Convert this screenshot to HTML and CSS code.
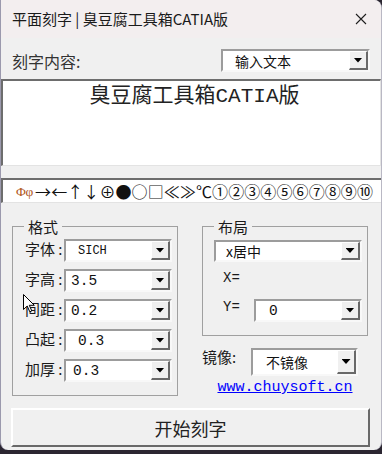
FILE: index.html
```html
<!DOCTYPE html>
<html lang="zh-CN">
<head>
<meta charset="utf-8">
<title>平面刻字</title>
<link rel="stylesheet" href="styles.css">
</head>
<body>
<div class="window">
  <div class="titlebar">
    <span class="title">平面刻字 | 臭豆腐工具箱CATIA版</span>
    <svg class="close" width="12" height="12" viewBox="0 0 12 12"><path d="M1 1L11 11M11 1L1 11" stroke="#1f1f1f" stroke-width="1.1" fill="none"/></svg>
  </div>
  <div class="main">
    <div class="toprow">
      <span class="lbl-main">刻字内容:</span>
      <div class="combo combo-src"><span class="cval cjk p12">输入文本</span><span class="cbtn"><i class="arrow"></i></span></div>
    </div>
    <div class="textarea"><div class="engrave">臭豆腐工具箱CATIA版</div></div>
    <div class="symbar"><span class="phi">Φ</span><span class="phi">φ</span><span class="sym">→</span><span class="sym">←</span><span class="sym">↑</span><span class="sym">↓</span><span class="sym">⊕</span><span class="sym">●</span><span class="sym">○</span><span class="sym">□</span><span class="sym">≪</span><span class="sym">≫</span><span class="sym">℃</span><span class="sym">①</span><span class="sym">②</span><span class="sym">③</span><span class="sym">④</span><span class="sym">⑤</span><span class="sym">⑥</span><span class="sym">⑦</span><span class="sym">⑧</span><span class="sym">⑨</span><span class="sym">⑩</span></div>
    <div class="groups">
      <fieldset class="group group-fmt">
        <legend>格式</legend>
        <div class="fields">
          <div class="field"><span class="flabel">字体 :</span><div class="combo w108"><span class="cval mono-s p12">SICH</span><span class="cbtn"><i class="arrow"></i></span></div></div>
          <div class="field"><span class="flabel">字高 :</span><div class="combo w108"><span class="cval mono-n p5">3.5</span><span class="cbtn"><i class="arrow"></i></span></div></div>
          <div class="field"><span class="flabel">间距 :</span><div class="combo w108"><span class="cval mono-n p5">0.2</span><span class="cbtn"><i class="arrow"></i></span></div></div>
          <div class="field"><span class="flabel">凸起 :</span><div class="combo w108"><span class="cval mono-n p12">0.3</span><span class="cbtn"><i class="arrow"></i></span></div></div>
          <div class="field"><span class="flabel">加厚 :</span><div class="combo w108"><span class="cval mono-n p6">0.3</span><span class="cbtn"><i class="arrow"></i></span></div></div>
        </div>
      </fieldset>
      <div class="rightcol">
        <fieldset class="group group-lay">
          <legend>布局</legend>
          <div class="combo combo-lay"><span class="cval cjk p10">x居中</span><span class="cbtn"><i class="arrow"></i></span></div>
          <div class="xrow">X=</div>
          <div class="yrow"><span class="ylabel">Y=</span><div class="combo w108"><span class="cval mono-n p13">0</span><span class="cbtn"><i class="arrow"></i></span></div></div>
        </fieldset>
        <div class="mirror"><span class="mlabel">镜像:</span><div class="combo combo-mir"><span class="cval cjk p13">不镜像</span><span class="cbtn"><i class="arrow"></i></span></div></div>
        <a class="link" href="#">www.chuysoft.cn</a>
      </div>
    </div>
    <button class="start">开始刻字</button>
  </div>
  <svg class="cursor" width="13" height="20" viewBox="0 0 13 20"><path d="M0.5 0.5 V15.5 L4.2 12 L6.8 17.8 L8.8 16.9 L6.3 11.3 H11.3 Z" fill="#fff" stroke="#000" stroke-width="1" stroke-linejoin="round"/></svg>
</div>
</body>
</html>
```
FILE: styles.css
```css
html, body {
  margin: 0;
  padding: 0;
}
body {
  width: 382px;
  height: 454px;
  overflow: hidden;
  background: #2b2631;
}
.window {
  position: relative;
  box-sizing: border-box;
  width: 382px;
  height: 450px;
  background: #f0f0f0;
  border-left: 1px solid #9b99ad;
  border-right: 1px solid #b9b8c4;
  border-radius: 0 8px 8px 8px;
  overflow: hidden;
  display: flex;
  flex-direction: column;
  font-family: "Noto Sans CJK SC", sans-serif;
  color: #1a1a1a;
}
.titlebar {
  flex: none;
  height: 38px;
  background: #f3eeef;
  display: flex;
  align-items: center;
  justify-content: space-between;
  padding: 0 14px 0 11px;
}
.title {
  font-size: 15px;
  line-height: 20px;
  color: #1a1a1a;
}
.close {
  display: block;
}
.main {
  flex: 1;
  display: flex;
  flex-direction: column;
}
.toprow {
  flex: none;
  display: flex;
  justify-content: space-between;
  align-items: center;
  margin-top: 11px;
  padding: 0 11px;
  height: 23px;
}
.lbl-main {
  font-size: 16px;
  line-height: 20px;
  color: #333;
}
.combo {
  display: flex;
  box-sizing: border-box;
  flex: none;
  background: #fff;
  border: 2px solid;
  border-color: #9c9c9c #f8f8f8 #f8f8f8 #9c9c9c;
  color: #111;
}
.combo-src { width: 149px; height: 23px; }
.w108 { width: 108px; height: 23px; }
.combo-lay { width: 148px; height: 22px; }
.combo-mir { width: 107px; height: 28px; }
.cval {
  flex: 1;
  display: flex;
  align-items: center;
  white-space: nowrap;
  overflow: hidden;
}
.cjk { font-family: "Noto Sans CJK SC", sans-serif; font-size: 14px; }
.mono-s { font-family: "Liberation Mono", monospace; font-size: 12px; }
.mono-n { font-family: "Liberation Mono", monospace; font-size: 14.5px; }
.p5 { padding-left: 5px; }
.p6 { padding-left: 7px; }
.p10 { padding-left: 10px; }
.p12 { padding-left: 12px; }
.p13 { padding-left: 13px; }
.cbtn {
  flex: none;
  width: 19px;
  box-sizing: border-box;
  background: #f0f0f0;
  border-top: 1px solid #fff;
  border-left: 1px solid #fff;
  border-right: 2px solid #696969;
  border-bottom: 2px solid #696969;
  display: flex;
  align-items: center;
  justify-content: center;
}
.arrow {
  display: block;
  width: 9px;
  height: 5px;
  background: #000;
  clip-path: polygon(0 0, 100% 0, 50% 100%);
}
.textarea {
  flex: none;
  margin-top: 7px;
  height: 87px;
  box-sizing: border-box;
  background: #fff;
  border-top: 2px solid #6d6d6d;
  border-left: 2px solid #6d6d6d;
  border-bottom: 1px solid #e3e3e3;
  border-right: 1px solid #e3e3e3;
  text-align: center;
  padding: 3px 0 0 6px;
}
.engrave {
  font-family: "Liberation Mono", "Noto Sans CJK SC", monospace;
  font-size: 21px;
  line-height: 26px;
  color: #222;
}
.symbar {
  flex: none;
  display: flex;
  align-items: center;
  margin-top: 12px;
  height: 25px;
  box-sizing: border-box;
  background: #fff;
  border-top: 2px solid #6d6d6d;
  border-left: 2px solid #6d6d6d;
  border-bottom: 1px solid #e3e3e3;
  padding-left: 13px;
  font-family: "Noto Sans CJK SC", sans-serif;
  font-size: 16px;
  line-height: 21px;
  white-space: nowrap;
  overflow: hidden;
  color: #111;
}
.phi {
  display: inline-block;
  flex: none;
  width: 9px;
  text-align: center;
  font-family: "Liberation Serif", serif;
  color: #b0561a;
  font-size: 13.5px;
}
.phi + .sym {
  margin-left: 1px;
}
.sym {
  display: inline-block;
  flex: none;
  width: 16.1px;
  text-align: center;
}
.group {
  margin: 0;
  box-sizing: border-box;
  width: 166px;
  min-width: 0;
  border: 1px solid #a0a0a0;
}
.groups {
  flex: none;
  display: flex;
  align-items: flex-start;
  gap: 24px;
  margin-top: 16px;
  padding-left: 11px;
}
.group legend {
  font-size: 15px;
  line-height: 15px;
  padding: 0 4px;
  color: #1a1a1a;
}
.group-fmt {
  padding: 5px 5px 13px 12px;
}
.group-fmt legend {
  margin-left: -1px;
}
.group-lay {
  padding: 6px 5px 13px 11px;
}
.fields {
  display: flex;
  flex-direction: column;
  gap: 7px;
}
.field {
  display: flex;
  align-items: flex-start;
}
.flabel {
  flex: none;
  width: 39px;
  font-size: 15px;
  line-height: 19px;
  white-space: nowrap;
}
.rightcol {
  width: 166px;
  display: flex;
  flex-direction: column;
}
.xrow {
  margin-top: 8px;
  margin-left: 9px;
  font-family: "Liberation Mono", monospace;
  font-size: 14px;
  line-height: 16px;
}
.yrow {
  display: flex;
  align-items: flex-start;
  margin-top: 13px;
}
.ylabel {
  flex: none;
  box-sizing: border-box;
  width: 40px;
  padding-left: 9px;
  font-family: "Liberation Mono", monospace;
  font-size: 14px;
  line-height: 16px;
}
.mirror {
  display: flex;
  align-items: flex-start;
  margin-top: 12px;
}
.mlabel {
  flex: none;
  width: 49px;
  font-size: 15px;
  line-height: 17px;
  white-space: nowrap;
}
.link {
  display: block;
  margin-top: 4px;
  text-align: center;
  font-family: "Liberation Mono", monospace;
  font-size: 15px;
  line-height: 15px;
  color: #0000ff;
  text-decoration: underline;
}
.start {
  flex: none;
  margin: 12px 11px 0 10px;
  height: 39px;
  box-sizing: border-box;
  background: #f0f0f0;
  border-top: 2px solid #fff;
  border-left: 2px solid #fff;
  border-right: 2px solid #696969;
  border-bottom: 2px solid #696969;
  padding: 0;
  font-family: "Noto Sans CJK SC", sans-serif;
  font-size: 18px;
  color: #222;
}
.cursor {
  position: absolute;
  left: 22px;
  top: 294px;
}
```
